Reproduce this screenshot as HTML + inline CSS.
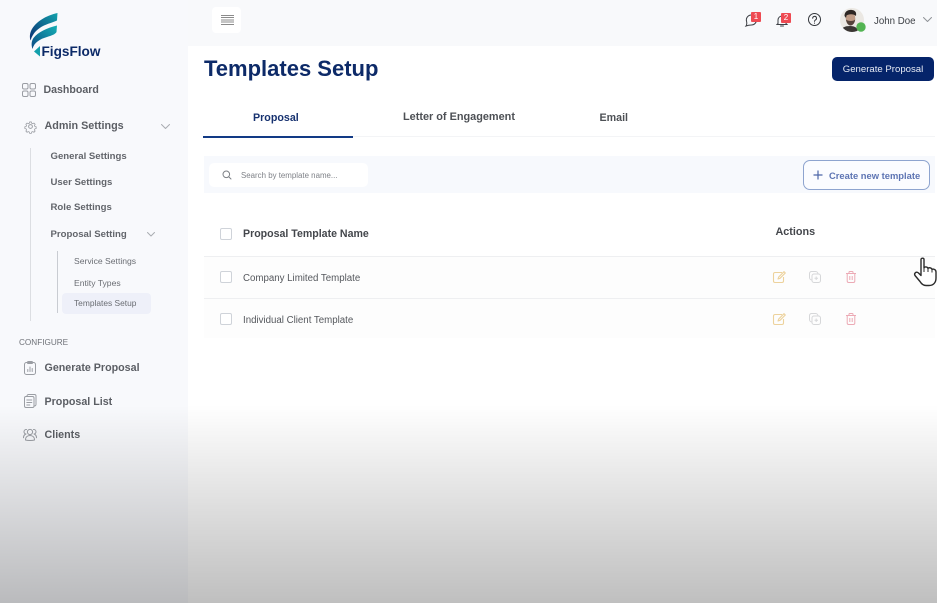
<!DOCTYPE html>
<html><head><meta charset="utf-8"><title>Templates Setup</title>
<style>
*{box-sizing:border-box;margin:0;padding:0}
html,body{width:937px;height:603px;overflow:hidden;background:#fff;font-family:"Liberation Sans",sans-serif}
#root{position:relative;width:937px;height:603px;overflow:hidden;filter:blur(.25px)}
.a{position:absolute;white-space:nowrap}
.b{font-weight:bold}
svg{position:absolute;overflow:visible}
.i{fill:none;stroke:#9a9da3;stroke-width:1;stroke-linecap:round;stroke-linejoin:round}
.cb{position:absolute;left:220px;width:12px;height:12px;border:1px solid #cfd3d9;border-radius:2px;background:#fff}
</style></head><body><div id="root">
<div class="a" style="left:0;top:0;width:188px;height:603px;background:#f8f9fc"></div>
<div class="a" style="left:188px;top:0;width:749px;height:46px;background:#f8f9fb"></div>

<!-- logo -->
<svg style="left:0;top:0" width="110" height="65" viewBox="0 0 110 65">
<defs>
<linearGradient id="g1" x1="0" y1="1" x2="1" y2="0"><stop offset="0" stop-color="#0b2f73"/><stop offset="1" stop-color="#13a3ad"/></linearGradient>
<linearGradient id="g2" x1="0" y1="1" x2="1" y2="0"><stop offset="0" stop-color="#0c4a85"/><stop offset="1" stop-color="#15b0b5"/></linearGradient>
</defs>
<path d="M57.500 13C46 15.500 35 22 31 31C29.800 34 29.500 37 30.500 40.500C33 32.500 38 28.500 44 25.500C50 23 55 21.500 57 20.500Z" fill="url(#g1)"/>
<path d="M57 25.500C47 28 38 32 33.500 38C31.500 41 31 44.500 32.500 49C34 42.500 40 39 47 37C52 35.500 55.500 34 56.500 32Z" fill="url(#g2)"/>
<path d="M40 46L40 56.500L34 51.500Z" fill="#13a0ac"/>
</svg>
<div class="a b" style="left:41.500px;top:43.500px;font-size:13.600px;color:#0c2a68">FigsFlow</div>

<!-- nav -->
<svg style="left:22px;top:83px" width="14" height="14" viewBox="0 0 14 14"><g class="i"><rect x=".5" y=".5" width="5.500" height="5.500" rx="1.500"/><rect x="8" y=".5" width="5.500" height="5.500" rx="1.500"/><rect x=".5" y="8" width="5.500" height="5.500" rx="1.500"/><rect x="8" y="8" width="5.500" height="5.500" rx="1.500"/></g></svg>
<div class="a" style="left:43.500px;top:83.500px;font-size:10.600px;font-weight:bold;color:#5b5e64">Dashboard</div>

<svg style="left:24px;top:119.500px" width="13" height="13" viewBox="0 0 24 24"><g class="i" style="stroke-width:1.800"><circle cx="12" cy="12" r="3.500"/><path d="M10 1.500h4l.7 3 2.500 1.100 2.700-1.600 2.800 2.900-1.600 2.600 1 2.500 3 .7v4l-3 .7-1 2.500 1.600 2.600-2.800 2.900-2.700-1.600-2.500 1-.7 3h-4l-.7-3-2.500-1-2.700 1.600-2.800-2.900 1.600-2.600-1-2.500-3-.7v-4l3-.7 1-2.500-1.600-2.600 2.800-2.900 2.700 1.600 2.500-1.100z" transform="translate(2.400 2.400) scale(.8)"/></g></svg>
<div class="a" style="left:44.500px;top:120px;font-size:10.800px;font-weight:bold;color:#5b5e64">Admin Settings</div>
<svg style="left:161px;top:124px" width="9" height="6"><path d="M.5 .5L4.500 4.500L8.500 .5" class="i" style="stroke:#a9acb1"/></svg>

<div class="a" style="left:30px;top:148px;width:1px;height:173px;background:#dcdee2"></div>
<div class="a b" style="left:50.500px;top:151px;font-size:9.600px;color:#62656b">General Settings</div>
<div class="a b" style="left:50.500px;top:176.500px;font-size:9.600px;color:#62656b">User Settings</div>
<div class="a b" style="left:50.500px;top:202px;font-size:9.600px;color:#62656b">Role Settings</div>
<div class="a b" style="left:50.500px;top:229px;font-size:9.600px;color:#62656b">Proposal Setting</div>
<svg style="left:147px;top:232px" width="8" height="5"><path d="M.5 .5L4 4L7.500 .5" class="i" style="stroke:#a9acb1"/></svg>

<div class="a" style="left:57px;top:251px;width:1px;height:62px;background:#c9ccd2"></div>
<div class="a" style="left:62px;top:293px;width:89px;height:21px;background:#eef0f9;border-radius:4px"></div>
<div class="a" style="left:74px;top:255.500px;font-size:8.600px;color:#6a6d73">Service Settings</div>
<div class="a" style="left:74px;top:278px;font-size:8.600px;color:#6a6d73">Entity Types</div>
<div class="a" style="left:74px;top:298px;font-size:8.400px;color:#6a6d73">Templates Setup</div>

<div class="a" style="left:19px;top:338px;font-size:8.200px;color:#6f7278">CONFIGURE</div>

<svg style="left:24px;top:361px" width="13" height="14" viewBox="0 0 13 14"><g class="i"><rect x=".5" y="1.500" width="11" height="12" rx="2"/><rect x="3.500" y=".5" width="5" height="2" rx=".8"/><path d="M3.800 10.500V8.500M6 10.500V6M8.200 10.500V7.500"/></g></svg>
<div class="a" style="left:44.500px;top:361.500px;font-size:10.700px;font-weight:bold;color:#5b5e64">Generate Proposal</div>

<svg style="left:24px;top:394px" width="13" height="14" viewBox="0 0 13 14"><g class="i"><rect x=".5" y="2.500" width="9.500" height="11" rx="1.500"/><path d="M3 2.500V2a1.500 1.500 0 0 1 1.500-1.500h6A1.500 1.500 0 0 1 12 2v8.500a1.500 1.500 0 0 1-2 1.400"/><path d="M2.800 6h5M2.800 8.500h5M2.800 11h3"/></g></svg>
<div class="a" style="left:44.500px;top:395.500px;font-size:10.700px;font-weight:bold;color:#5b5e64">Proposal List</div>

<svg style="left:23px;top:428px" width="14" height="13" viewBox="0 0 14 13"><g class="i"><circle cx="7" cy="4" r="2.600"/><path d="M2.500 12c0-3 2-4.500 4.500-4.500s4.500 1.500 4.500 4.500c-2 .7-7 .7-9 0z"/><path d="M3.500 1.500A2.200 2.200 0 0 0 3 6C1.500 6.500.5 7.800.5 9.800M10.500 1.500A2.200 2.200 0 0 1 11 6C12.500 6.500 13.500 7.800 13.500 9.800"/></g></svg>
<div class="a" style="left:44.500px;top:428.500px;font-size:10.700px;font-weight:bold;color:#5b5e64">Clients</div>

<!-- top bar -->
<div class="a" style="left:212px;top:7px;width:29px;height:26px;background:#fff;border-radius:4px"></div>
<div class="a" style="left:221px;top:15px;width:13px;height:10px;background:repeating-linear-gradient(#8b8b8b 0 1px,#fff 1px 2.250px)"></div>

<svg style="left:745px;top:14px" width="13" height="13" viewBox="0 0 13 13"><path d="M6.500 1A5 5 0 0 1 11.500 6A5 5 0 0 1 6.500 11C4.500 11 3.500 11 1 12C2 10.500 2 9.500 1.600 7.500A5 5 0 0 1 6.500 1Z" fill="none" stroke="#3c3f44" stroke-width="1"/></svg>
<div class="a" style="left:751px;top:12px;width:10px;height:10px;background:#ee4a52;color:#fff;font-size:8px;line-height:10px;text-align:center;border-radius:1px">1</div>
<svg style="left:776px;top:14px" width="12" height="13" viewBox="0 0 12 13"><path d="M2 9.500V6a4 4 0 0 1 8 0v3.500L11 10.500H1ZM4.500 12h3" fill="none" stroke="#3c3f44" stroke-width="1" stroke-linecap="round"/></svg>
<div class="a" style="left:781px;top:12.500px;width:10px;height:10px;background:#ee4a52;color:#fff;font-size:8px;line-height:10px;text-align:center;border-radius:1px">2</div>
<svg style="left:808px;top:13px" width="13" height="13" viewBox="0 0 13 13"><circle cx="6.500" cy="6.500" r="6" fill="none" stroke="#33363b" stroke-width="1"/><path d="M4.700 5.200A1.900 1.900 0 1 1 7.500 6.900C6.800 7.300 6.500 7.600 6.500 8.400M6.500 10v.2" fill="none" stroke="#33363b" stroke-width="1" stroke-linecap="round"/></svg>

<!-- avatar -->
<svg style="left:840px;top:8px" width="26" height="26" viewBox="0 0 26 26">
<defs><clipPath id="av"><circle cx="12" cy="12" r="12"/></clipPath></defs>
<g clip-path="url(#av)"><rect width="24" height="24" fill="#ebe8e3"/>
<path d="M0 24C1 19.500 5 18 10 18S18 20 18 24Z" fill="#3a3633"/>
<ellipse cx="10.500" cy="10.500" rx="4.800" ry="6.500" fill="#c09c86"/>
<path d="M4.500 8C4.500 3.500 8 1.500 12 2S16.500 5 16 8C13.500 5.500 8.500 6 6.500 7.500L6 10Z" fill="#2e2622"/>
<path d="M6 11.500C6.500 15.500 8.500 17.500 10.500 17.500S14.700 15.500 15.200 11.500C13.500 13.500 8 13.500 6 11.500Z" fill="#54423a"/></g>
<circle cx="21" cy="19" r="4.700" fill="#53b452"/>
</svg>
<div class="a" style="left:874px;top:15.500px;font-size:9.700px;color:#3d4045">John Doe</div>
<svg style="left:923px;top:17px" width="9" height="6"><path d="M.5 .5L4.500 4.500L8.500 .5" class="i" style="stroke:#8f9297"/></svg>

<!-- header -->
<div class="a" style="left:204px;top:56px;font-size:22px;font-weight:bold;color:#0d2a68">Templates Setup</div>
<div class="a" style="left:832px;top:57px;width:102px;height:24px;background:#05246a;border-radius:5px;color:#e8ecf5;font-size:9.600px;line-height:26px;text-align:center">Generate Proposal</div>

<!-- tabs -->
<div class="a" style="left:203px;top:136px;width:732px;height:1px;background:#f3f4f6"></div>
<div class="a" style="left:203px;top:136px;width:150px;height:2px;background:#123a85"></div>
<div class="a b" style="left:253px;top:112px;font-size:10.700px;color:#173270">Proposal</div>
<div class="a b" style="left:403px;top:111px;font-size:10.900px;color:#4d5055">Letter of Engagement</div>
<div class="a b" style="left:599.500px;top:112px;font-size:10.700px;color:#4d5055">Email</div>

<!-- filter band -->
<div class="a" style="left:204px;top:156px;width:731px;height:37px;background:#f7f9fd"></div>
<div class="a" style="left:209px;top:163px;width:159px;height:24px;background:#fff;border-radius:5px"></div>
<svg style="left:222px;top:170px" width="10" height="10" viewBox="0 0 10 10"><circle cx="4.300" cy="4.300" r="3.300" fill="none" stroke="#7d8086" stroke-width="1"/><path d="M6.800 6.800L9 9" stroke="#7d8086" stroke-width="1" stroke-linecap="round"/></svg>
<div class="a" style="left:241px;top:170.500px;font-size:7.900px;color:#7f8288">Search by template name...</div>

<div class="a" style="left:802.500px;top:159.500px;width:127px;height:30.500px;border:1px solid #8ea4cf;border-radius:7px;background:#fbfcff"></div>
<svg style="left:813px;top:169.500px" width="10" height="10"><path d="M5 .5V9.500M.5 5H9.500" stroke="#4d66a8" stroke-width="1.200"/></svg>
<div class="a b" style="left:829px;top:169.500px;font-size:9.400px;color:#5d74b3">Create new template</div>

<!-- table -->
<div class="cb" style="top:228px"></div>
<div class="a b" style="left:243px;top:228px;font-size:10.600px;color:#44474c">Proposal Template Name</div>
<div class="a b" style="left:775.500px;top:225.500px;font-size:10.800px;color:#44474c">Actions</div>
<div class="a" style="left:204px;top:256px;width:731px;height:1px;background:#eeeff1"></div>
<div class="a" style="left:204px;top:257px;width:731px;height:41px;background:#fdfdfd"></div>
<div class="a" style="left:204px;top:298px;width:731px;height:1px;background:#eeeff1"></div>
<div class="a" style="left:204px;top:299px;width:731px;height:39px;background:#fdfdfd"></div>

<div class="cb" style="top:271px"></div>
<div class="a" style="left:243px;top:272.500px;font-size:9.700px;color:#55585d">Company Limited Template</div>
<div class="cb" style="top:313px"></div>
<div class="a" style="left:243px;top:314.500px;font-size:9.700px;color:#55585d">Individual Client Template</div>

<svg style="left:773px;top:271px" width="13" height="12" viewBox="0 0 13 12"><path d="M9 1.500H2a1.500 1.500 0 0 0-1.500 1.500v7A1.500 1.500 0 0 0 2 11.500h7A1.500 1.500 0 0 0 10.500 10V6" fill="none" stroke="#edd29c" stroke-width="1.100"/><path d="M11 .7L12.300 2L7 7.300L5 8L5.700 6Z" fill="none" stroke="#edd29c" stroke-width="1.100" stroke-linejoin="round"/></svg>
<svg style="left:773px;top:313px" width="13" height="12" viewBox="0 0 13 12"><path d="M9 1.500H2a1.500 1.500 0 0 0-1.500 1.500v7A1.500 1.500 0 0 0 2 11.500h7A1.500 1.500 0 0 0 10.500 10V6" fill="none" stroke="#edd29c" stroke-width="1.100"/><path d="M11 .7L12.300 2L7 7.300L5 8L5.700 6Z" fill="none" stroke="#edd29c" stroke-width="1.100" stroke-linejoin="round"/></svg>

<svg style="left:809px;top:271px" width="12" height="12" viewBox="0 0 12 12"><g fill="none" stroke="#d6d7d9" stroke-width="1"><rect x="3" y="3" width="8.500" height="8.500" rx="2"/><path d="M3 9A2.500 2.500 0 0 1 .5 6.500V2.500a2 2 0 0 1 2-2h4A2.500 2.500 0 0 1 9 3M7.200 5.500v3.500M5.500 7.200h3.500"/></g></svg>
<svg style="left:809px;top:313px" width="12" height="12" viewBox="0 0 12 12"><g fill="none" stroke="#d6d7d9" stroke-width="1"><rect x="3" y="3" width="8.500" height="8.500" rx="2"/><path d="M3 9A2.500 2.500 0 0 1 .5 6.500V2.500a2 2 0 0 1 2-2h4A2.500 2.500 0 0 1 9 3M7.200 5.500v3.500M5.500 7.200h3.500"/></g></svg>

<svg style="left:846px;top:271px" width="10" height="12" viewBox="0 0 10 12"><g fill="none" stroke="#ecaab5" stroke-width="1"><path d="M0 2.500H10M3 2.500V1.200Q3 .5 3.700 .5H6.300Q7 .5 7 1.200V2.500M1.200 2.500V10a1.500 1.500 0 0 0 1.500 1.500H7.300A1.500 1.500 0 0 0 8.800 10V2.500M3.800 5V9M6.200 5V9"/></g></svg>
<svg style="left:846px;top:313px" width="10" height="12" viewBox="0 0 10 12"><g fill="none" stroke="#ecaab5" stroke-width="1"><path d="M0 2.500H10M3 2.500V1.200Q3 .5 3.700 .5H6.300Q7 .5 7 1.200V2.500M1.200 2.500V10a1.500 1.500 0 0 0 1.500 1.500H7.300A1.500 1.500 0 0 0 8.800 10V2.500M3.800 5V9M6.200 5V9"/></g></svg>

<!-- hand cursor -->
<svg style="left:913px;top:257px" width="24" height="30" viewBox="0 0 24 30"><path d="M8 2.500C8 .8 11 .8 11 2.500V11C11.500 9.500 14.500 9.500 15 11.500C15.500 10.300 18.500 10.500 19 12.500C19.800 11.800 23 12 23 15V21C23 25.500 20.500 28.500 16 28.500H13C10 28.500 8.500 27 7 24.500L2 18.500C.8 16.500 3 14 5.500 16L8 18.500Z" fill="#fff" stroke="#2b2b2b" stroke-width="1.400" stroke-linejoin="round"/><path d="M11 11V15M15 11.500V15M19 12.500V15.500" stroke="#2b2b2b" stroke-width="1" fill="none"/></svg>

<!-- bottom fade -->
<div class="a" style="left:0;top:405px;width:937px;height:198px;background:linear-gradient(rgba(0,0,0,0),rgba(0,0,0,.25))"></div>
</div></body></html>
